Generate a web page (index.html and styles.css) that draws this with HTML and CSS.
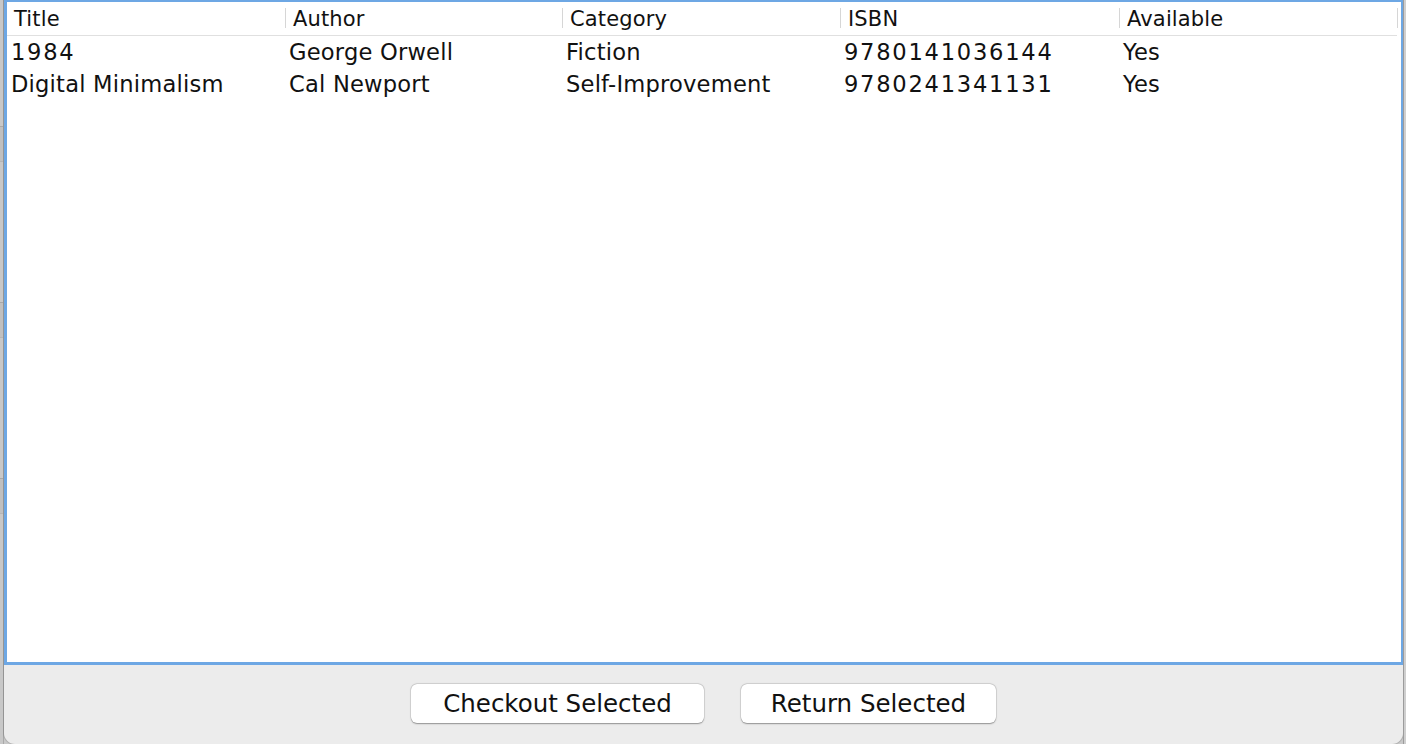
FILE: index.html
```html
<!DOCTYPE html>
<html>
<head>
<meta charset="utf-8">
<link rel="stylesheet" href="styles.css">
</head>
<body>
<div class="desk">
  <div class="desk-strip"><span class="band b1"></span><span class="band b2"></span><span class="band b3"></span></div>
  <div class="window">
    <div class="scroll">
      <div class="thead">
        <div class="th c1">Title</div>
        <div class="th c2">Author</div>
        <div class="th c3">Category</div>
        <div class="th c4">ISBN</div>
        <div class="th c5">Available</div>
      </div>
      <div class="tr">
        <div class="td c1 num">1984</div>
        <div class="td c2">George Orwell</div>
        <div class="td c3">Fiction</div>
        <div class="td c4 num">9780141036144</div>
        <div class="td c5">Yes</div>
      </div>
      <div class="tr">
        <div class="td c1">Digital Minimalism</div>
        <div class="td c2">Cal Newport</div>
        <div class="td c3">Self-Improvement</div>
        <div class="td c4 num">9780241341131</div>
        <div class="td c5">Yes</div>
      </div>
    </div>
    <div class="actions">
      <button class="btn btn-checkout">Checkout Selected</button>
      <button class="btn btn-return">Return Selected</button>
    </div>
  </div>
  <div class="desk-strip right"></div>
</div>
</body>
</html>
```
FILE: styles.css
```css
html, body {
  margin: 0;
  padding: 0;
  width: 1406px;
  height: 744px;
  overflow: hidden;
  background: #c9c9c9;
  font-family: "DejaVu Sans", "Liberation Sans", sans-serif;
  color: #111;
}
.desk {
  display: flex;
  height: 744px;
}
.desk-strip {
  width: 3px;
  background: #c8c8c8;
  border-right: 1px solid #a9a9a9;
  display: flex;
  flex-direction: column;
}
.desk-strip.right {
  width: 2px;
  border-right: none;
  border-left: 1px solid #9c9c9c;
  background: #cfcfcf;
}
.band {
  display: block;
  height: 34px;
  border-top: 1px solid #a8a8a8;
  border-bottom: 1px solid #b5b5b5;
  background: #c0c0c0;
}
.b1 { margin-top: 126px; }
.b2 { margin-top: 140px; }
.b3 { margin-top: 140px; }
.window {
  width: 1399px;
  height: 744px;
  background: #ececec;
  border-radius: 0 0 11px 11px;
  display: flex;
  flex-direction: column;
  box-shadow: 0 0 0 1px rgba(0,0,0,0.12);
}
.scroll {
  height: 660px;
  background: #fff;
  border: 2px solid #6da7e4;
  border-bottom-width: 3px;
  border-left-width: 3px;
  display: flex;
  flex-direction: column;
}
.c1 { width: 279px; }
.c2 { width: 277px; }
.c3 { width: 278px; }
.c4 { width: 279px; }
.c5 { width: 278px; }
.thead {
  display: flex;
  height: 33px;
  border-bottom: 1px solid #e0e0e0;
  margin-right: 4px;
}
.th {
  box-sizing: border-box;
  flex: none;
  font-size: 21px;
  letter-spacing: 0.15px;
  padding: 5px 0 0 7px;
  position: relative;
}
.th::after {
  content: "";
  position: absolute;
  right: 0;
  top: 6px;
  height: 20px;
  width: 1px;
  background: #d6d6d6;
}
.tr {
  display: flex;
  height: 32px;
  align-items: center;
}
.td {
  box-sizing: border-box;
  flex: none;
  font-size: 22.6px;
  letter-spacing: 0.2px;
  padding-left: 3px;
  white-space: nowrap;
}
.td.c1 { padding-left: 4px; }
.td.num { letter-spacing: 1.75px; }
.actions {
  display: flex;
  justify-content: center;
  gap: 37px;
  padding-top: 19px;
}
.btn {
  font-family: "DejaVu Sans", "Liberation Sans", sans-serif;
  font-size: 24.5px;
  color: #111;
  background: #fff;
  border: none;
  border-radius: 6px;
  height: 39px;
  padding: 0;
  box-shadow: 0 0.5px 1.5px rgba(0,0,0,0.35), 0 0 0 0.5px rgba(0,0,0,0.12);
}
.btn-checkout { width: 293px; }
.btn-return { width: 255px; }
```
